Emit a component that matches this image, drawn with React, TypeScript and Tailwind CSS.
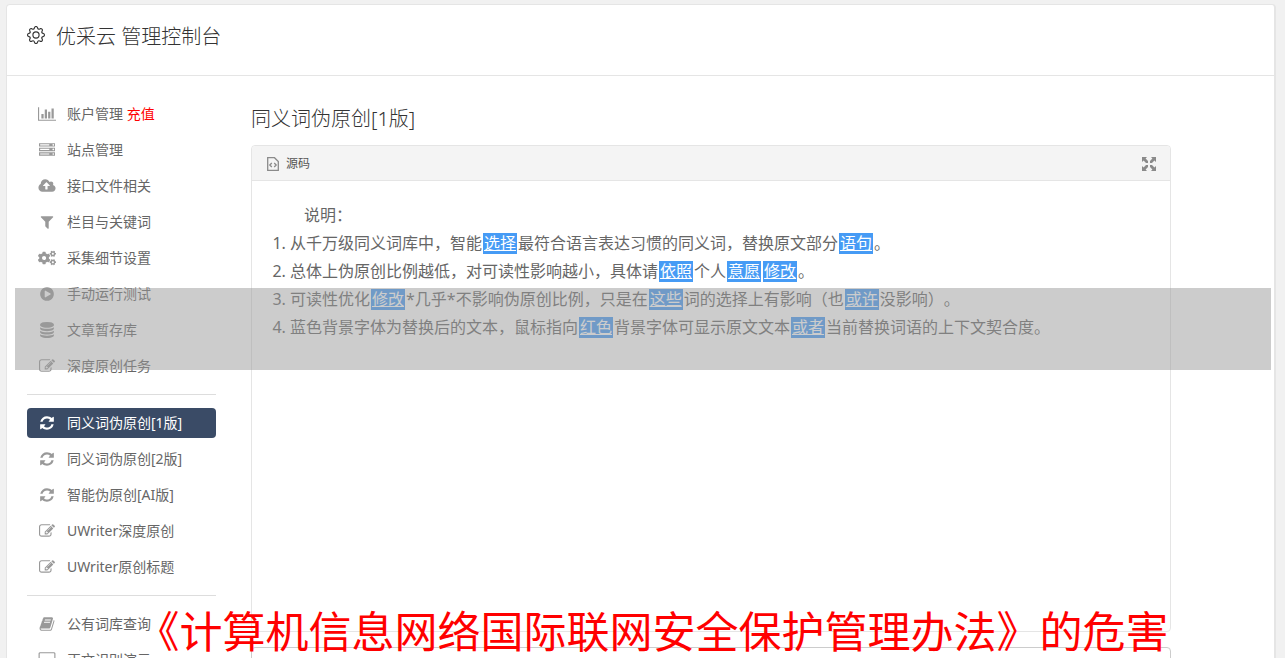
import type { ReactNode } from "react";
import { BsGear } from "react-icons/bs";
import { FaCogs } from "react-icons/fa";

const ICON_PATHS = {
  chart: "M640 896v512h-256v-512h256zm384-512v1024h-256v-1024h256zm1024 1152v128h-2048v-1536h128v1408h1920zm-640-896v768h-256v-768h256zm384-384v1152h-256v-1152h256z",
  server: "M128 1408h1024v-128h-1024v128zm0-512h1024v-128h-1024v128zm1568 448q0-40-28-68t-68-28-68 28-28 68 28 68 68 28 68-28 28-68zm-1568-960h1024v-128h-1024v128zm1568 448q0-40-28-68t-68-28-68 28-28 68 28 68 68 28 68-28 28-68zm0-512q0-40-28-68t-68-28-68 28-28 68 28 68 68 28 68-28 28-68zm96 832v384h-1792v-384h1792zm0-512v384h-1792v-384h1792zm0-512v384h-1792v-384h1792z",
  upload: "M1280 864q0-14-9-23l-352-352q-9-9-23-9t-23 9l-351 351q-10 12-10 24 0 14 9 23t23 9h224v352q0 13 9.5 22.5t22.5 9.5h192q13 0 22.5-9.5t9.5-22.5v-352h224q13 0 22.5-9.5t9.5-22.5zm640 288q0 159-112.5 271.5t-271.5 112.5h-1088q-185 0-316.5-131.5t-131.5-316.5q0-130 70-240t188-165q-2-30-2-43 0-212 150-362t362-150q156 0 285.5 87t188.5 231q71-62 166-62 106 0 181 75t75 181q0 76-41 138 130 31 213.5 135.5t83.5 238.5z",
  filter: "M1595 295q17 41-14 70l-493 493v742q0 42-39 59-13 5-25 5-27 0-45-19l-256-256q-19-19-19-45v-486l-493-493q-31-29-14-70 17-39 59-39h1280q42 0 59 39z",
  play: "M896 128q209 0 385.5 103t279.5 279.5 103 385.5-103 385.5-279.5 279.5-385.5 103-385.5-103-279.5-279.5-103-385.5 103-385.5 279.5-279.5 385.5-103zm384 823q32-18 32-55t-32-55l-544-320q-31-19-64-1-32 19-32 56v640q0 37 32 56 16 8 32 8 17 0 32-9z",
  database: "M896 768q237 0 443-43t325-127v170q0 69-103 128t-280 93.5-385 34.5-385-34.5-280-93.5-103-128v-170q119 84 325 127t443 43zm0 768q237 0 443-43t325-127v170q0 69-103 128t-280 93.5-385 34.5-385-34.5-280-93.5-103-128v-170q119 84 325 127t443 43zm0-384q237 0 443-43t325-127v170q0 69-103 128t-280 93.5-385 34.5-385-34.5-280-93.5-103-128v-170q119 84 325 127t443 43zm0-1152q208 0 385 34.5t280 93.5 103 128v128q0 69-103 128t-280 93.5-385 34.5-385-34.5-280-93.5-103-128v-128q0-69 103-128t280-93.5 385-34.5z",
  edit: "M888 1184l116-116-152-152-116 116v56h96v96h56zm440-720q-16-16-33 1l-350 350q-17 17-1 33t33-1l350-350q17-17 1-33zm80 594v190q0 119-84.5 203.5t-203.5 84.5h-832q-119 0-203.5-84.5t-84.5-203.5v-832q0-119 84.5-203.5t203.5-84.5h832q63 0 117 25 15 7 18 23 3 17-9 29l-49 49q-14 14-32 8-23-6-45-6h-832q-66 0-113 47t-47 113v832q0 66 47 113t113 47h832q66 0 113-47t47-113v-126q0-13 9-22l64-64q15-15 35-7t20 29zm-96-738l288 288-672 672h-288v-288zm444 132l-92 92-288-288 92-92q28-28 68-28t68 28l152 152q28 28 28 68t-28 68z",
  refresh: "M1639 1056q0 5-1 7-64 268-268 434.5t-478 166.5q-146 0-282.5-55t-243.5-157l-129 129q-19 19-45 19t-45-19-19-45v-448q0-26 19-45t45-19h448q26 0 45 19t19 45-19 45l-137 137q71 66 161 102t187 36q134 0 250-65t186-179q11-17 53-117 8-23 30-23h192q13 0 22.5 9.5t9.5 22.5zm25-800v448q0 26-19 45t-45 19h-448q-26 0-45-19t-19-45 19-45l138-138q-148-137-349-137-134 0-250 65t-186 179q-11 17-53 117-8 23-30 23h-199q-13 0-22.5-9.5t-9.5-22.5v-7q65-268 270-434.5t480-166.5q146 0 284 55.5t245 156.5l130-129q19-19 45-19t45 19 19 45z",
  book: "M1703 478q40 57 18 129l-275 906q-19 64-76.5 107.5t-122.5 43.5h-923q-77 0-148.5-53.5t-99.5-131.5q-24-67-2-127 0-4 3-27t4-37q1-8-3-21.5t-3-19.5q2-11 8-21t16.5-23.5 16.5-23.5q23-38 45-91.5t30-91.5q3-10 .5-30t-.5-28q3-11 17-28t17-23q21-36 42-92t25-90q1-9-2.5-32t.5-28q4-13 22-30.5t22-22.5q19-26 42.5-84.5t27.5-96.5q1-8-3-25.5t-2-26.5q2-8 9-18t18-23 17-21q8-12 16.5-30.5t15-35 16-36 19.5-32 26.5-23.5 36-11.5 47.5 5.5l-1 3q38-9 51-9h761q74 0 114 56t18 130l-274 906q-36 119-71.5 153.5t-128.5 34.5h-869q-27 0-38 15-11 16-1 43 24 70 144 70h923q29 0 56-15.5t35-41.5l300-987q7-22 5-57 38 15 59 43zm-1064 2q-4 13 2 22.5t20 9.5h608q13 0 25.5-9.5t16.5-22.5l21-64q4-13-2-22.5t-20-9.5h-608q-13 0-25.5 9.5t-16.5 22.5zm-83 256q-4 13 2 22.5t20 9.5h608q13 0 25.5-9.5t16.5-22.5l21-64q4-13-2-22.5t-20-9.5h-608q-13 0-25.5 9.5t-16.5 22.5z",
  screen: "M256 0h1536q80 0 136 56t56 136v960q0 80-56 136t-136 56h-1536q-80 0-136-56t-56-136v-960q0-80 56-136t136-56zm0 128q-64 0-64 64v960q0 64 64 64h1536q64 0 64-64v-960q0-64-64-64z",
};

type IconName = keyof typeof ICON_PATHS | "cogs";

// these two glyphs are wider than the usual 1792 unit box
const WIDE_ICONS = ["chart", "screen"];

const menuGroups: { icon: IconName; label: string; extra?: string; active?: boolean }[][] = [
  [
    { icon: "chart", label: "账户管理", extra: "充值" },
    { icon: "server", label: "站点管理" },
    { icon: "upload", label: "接口文件相关" },
    { icon: "filter", label: "栏目与关键词" },
    { icon: "cogs", label: "采集细节设置" },
    { icon: "play", label: "手动运行测试" },
    { icon: "database", label: "文章暂存库" },
    { icon: "edit", label: "深度原创任务" },
  ],
  [
    { icon: "refresh", label: "同义词伪原创[1版]", active: true },
    { icon: "refresh", label: "同义词伪原创[2版]" },
    { icon: "refresh", label: "智能伪原创[AI版]" },
    { icon: "edit", label: "UWriter深度原创" },
    { icon: "edit", label: "UWriter原创标题" },
  ],
  [
    { icon: "book", label: "公有词库查询" },
    { icon: "screen", label: "正文识别演示" },
  ],
];

function MenuIcon({ name }: { name: IconName }) {
  if (name === "cogs") return <FaCogs className="w-[18px] h-4" />;
  const width = name === "upload" ? 1920 : WIDE_ICONS.includes(name) ? 2048 : 1792;
  return (
    <svg viewBox={`0 0 ${width} 1792`} className="w-[18px] h-4" fill="currentColor" fillRule="evenodd" aria-hidden="true">
      <path d={ICON_PATHS[name]} />
    </svg>
  );
}

function Word({ children }: { children: ReactNode }) {
  return <span className="mx-px px-px bg-[#469bf5] text-white underline leading-[21px] inline-block">{children}</span>;
}

function SourceIcon() {
  return (
    <svg viewBox="0 0 12 14" className="w-3 h-3.5" fill="none" stroke="#8a8a8a" aria-hidden="true">
      <path d="M.7.7h6.8l3.8 3.8v8.8H.7z" strokeWidth="1.3" />
      <path d="M4.8 6 2.8 8l2 2M7.2 6l2 2-2 2" strokeWidth="1.3" />
    </svg>
  );
}

function MaximizeIcon() {
  return (
    <svg viewBox="0 0 14 14" className="w-3.5 h-3.5" fill="#8a8a8a" aria-hidden="true">
      <path d="M0 0h5L3.6 1.6 6 4v2H4L1.6 3.6 0 5zM14 0v5l-1.6-1.4L10 6H8V4l2.4-2.4L9 0zM0 14V9l1.6 1.4L4 8h2v2l-2.4 2.4L5 14zM14 14H9l1.4-1.6L8 10V8h2l2.4 2.4L14 9z" />
    </svg>
  );
}

export default function App() {
  return (
    <div className="relative h-screen overflow-hidden bg-[#f1f1f1] pt-1 pl-1.5 pr-[9px] text-[#666] font-['Noto_Sans','Noto_Sans_CJK_SC',sans-serif] [text-spacing-trim:space-all]">
      <div className="bg-white border border-r-2 border-[#e5e5e5] rounded min-h-screen">
        <header className="h-[71px] pl-5 pb-2.5 flex items-center gap-[11px] border-b border-[#e5e5e5] text-[#333]">
          <BsGear className="w-[18px] h-[18px]" />
          <h1 className="pt-1 text-xl font-light">优采云 管理控制台</h1>
        </header>

        <div className="flex gap-[35px] pl-5 pr-[103px] pt-[23px]">
          <nav className="w-[189px] shrink-0 text-sm">
            {menuGroups.map((group, index) => (
              <ul
                key={index}
                className={`flex flex-col gap-1.5 ${index > 0 ? "mt-[13px] pt-[13px] border-t border-[#ddd]" : ""}`}
              >
                {group.map((item) => (
                  <li key={item.label}>
                    <a
                      href="#"
                      className={`h-[30px] pl-[11px] flex items-center gap-[11px] rounded whitespace-nowrap ${
                        item.active ? "bg-[#3a4b66] text-white" : "text-[#666]"
                      }`}
                    >
                      <span className={item.active ? "text-white" : "text-[#999]"}>
                        <MenuIcon name={item.icon} />
                      </span>
                      <span>
                        {item.label}
                        {item.extra && <span className="text-[#f00]"> {item.extra}</span>}
                      </span>
                    </a>
                  </li>
                ))}
              </ul>
            ))}
          </nav>

          <main className="flex-1 min-w-0">
            <h2 className="h-[46px] pt-1 text-xl leading-8 font-light text-[#333]">同义词伪原创[1版]</h2>
            <section className="border border-[#e5e5e5] rounded">
              <div className="h-[35px] pt-0.5 pl-[15px] pr-3.5 flex items-center justify-between bg-[#f4f4f4] border-b border-[#e5e5e5] rounded-t">
                <button type="button" className="flex items-center gap-[7px] text-xs text-[#555]">
                  <SourceIcon />
                  源码
                </button>
                <button type="button" aria-label="最大化">
                  <MaximizeIcon />
                </button>
              </div>
              <div className="h-[450px] p-5 text-base leading-7">
                <p className="indent-8">说明：</p>
                <ol className="list-decimal pl-[18px]">
                  <li>
                    从千万级同义词库中，智能<Word>选择</Word>最符合语言表达习惯的同义词，替换原文部分<Word>语句</Word>。
                  </li>
                  <li>
                    总体上伪原创比例越低，对可读性影响越小，具体请<Word>依照</Word>个人<Word>意愿</Word>
                    <Word>修改</Word>。
                  </li>
                  <li>
                    可读性优化<Word>修改</Word>*几乎*不影响伪原创比例，只是在<Word>这些</Word>词的选择上有影响（也
                    <Word>或许</Word>没影响）。
                  </li>
                  <li>
                    蓝色背景字体为替换后的文本，鼠标指向<Word>红色</Word>背景字体可显示原文文本<Word>或者</Word>
                    当前替换词语的上下文契合度。
                  </li>
                </ol>
              </div>
            </section>
            <textarea aria-label="原文" className="mt-[15px] w-full h-40 block border border-[#ccc] rounded resize-none" />
          </main>
        </div>
      </div>

      <div className="absolute left-[15px] right-3.5 top-72 h-[82px] bg-[#999]/50" />
      <p className="absolute inset-x-0 bottom-0 pl-5 text-center text-[43px] leading-[52px] whitespace-nowrap text-[#f00]">
        《计算机信息网络国际联网安全保护管理办法》的危害
      </p>
    </div>
  );
}
